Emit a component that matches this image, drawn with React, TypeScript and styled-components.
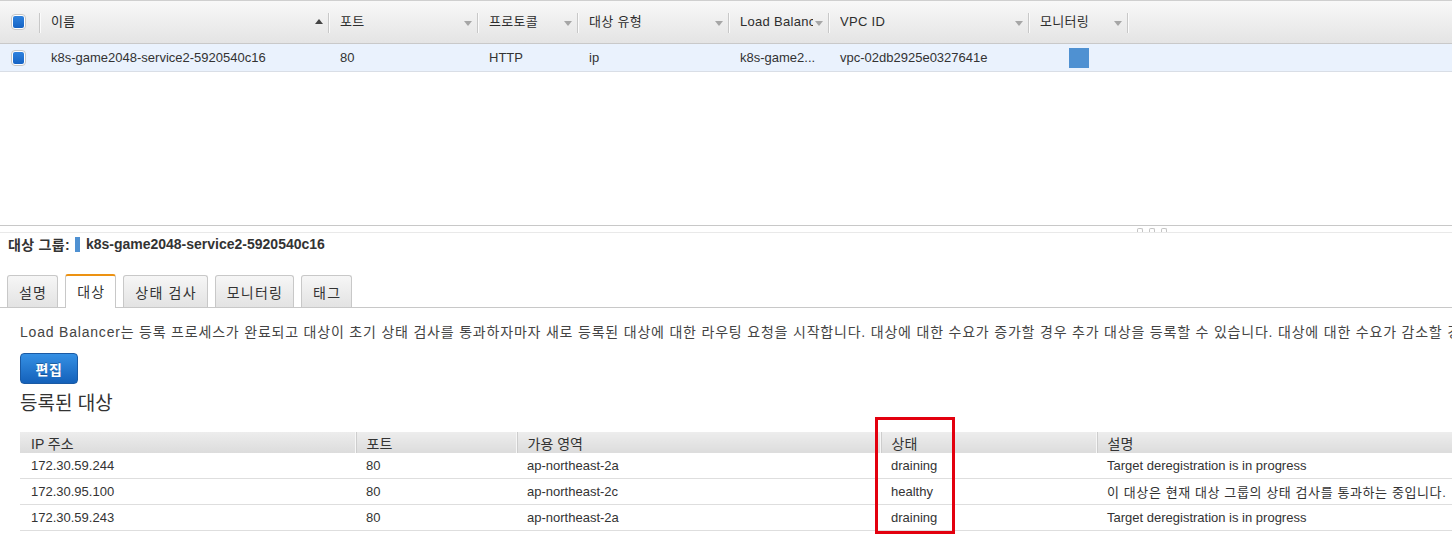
import React from 'react';
import styled, { createGlobalStyle } from 'styled-components';

const GlobalStyle = createGlobalStyle`
  html, body {
    margin: 0;
    padding: 0;
    background: #fff;
    overflow: hidden;
  }
  body {
    font-family: "Liberation Sans", Arial, "Noto Sans CJK KR", sans-serif;
    font-size: 13px;
    color: #333;
  }
`;

const COLS = '40px 289px 149px 100px 151px 100px 200px 99px';

const Page = styled.div`
  width: 1452px;
  overflow: hidden;
  padding-bottom: 20px;
`;

const ListPane = styled.div`
  height: 225px;
  box-sizing: border-box;
  border-top: 1px solid #cfcfcf;
`;

const ListHeader = styled.div`
  display: grid;
  grid-template-columns: ${COLS};
  height: 42px;
  background: linear-gradient(#f8f8f8, #e4e4e4);
  border-bottom: 1px solid #c9c9c9;
`;

const HeaderCell = styled.div`
  position: relative;
  display: flex;
  align-items: center;
  padding: 0 6px 0 11px;
  min-width: 0;

  &::after {
    content: '';
    position: absolute;
    right: 0;
    top: 12px;
    height: 20px;
    width: 1px;
    background: #c8c8c8;
    box-shadow: 1px 0 0 #fbfbfb;
  }
`;

const HeaderLabel = styled.span`
  flex: 1;
  min-width: 0;
  overflow: hidden;
  white-space: nowrap;
  color: #2d2d2d;
  line-height: 18px;
  letter-spacing: 0.3px;
`;

const SortArrow = styled.span<{ $up?: boolean }>`
  flex: none;
  width: 0;
  height: 0;
  margin-left: 2px;
  border-left: 4px solid transparent;
  border-right: 4px solid transparent;
  ${p =>
    p.$up
      ? 'border-bottom: 5px solid #444; margin-top: -2px;'
      : 'border-top: 5px solid #a6a6a6; margin-top: 2px;'}
`;

const ListRow = styled.div`
  display: grid;
  grid-template-columns: ${COLS};
  height: 27px;
  background: #eaf2fd;
  border-bottom: 1px solid #d9dee6;
`;

const RowCell = styled.div<{ $center?: boolean }>`
  display: flex;
  align-items: center;
  justify-content: ${p => (p.$center ? 'center' : 'flex-start')};
  padding: 0 6px 0 11px;
  white-space: nowrap;
  overflow: hidden;
  color: #333;
`;

const CheckBox = styled.span`
  display: inline-flex;
  align-items: center;
  justify-content: center;
  width: 15px;
  height: 16px;
  box-sizing: border-box;
  border: 1px solid #c6c6c6;
  border-radius: 4px;
  background: #fff;

  &::before {
    content: '';
    width: 11px;
    height: 12px;
    border-radius: 2px;
    background: linear-gradient(#2f82de, #1563c4);
  }
`;

const MonitorSwatch = styled.span`
  width: 20px;
  height: 20px;
  background: #4f91d2;
  margin-left: -5px;
`;

const Splitter = styled.div`
  height: 6px;
  border-top: 1px solid #c8c8c8;
  border-bottom: 1px solid #e9e9e9;
  display: flex;
  align-items: flex-end;
  gap: 6px;
  padding-left: 1137px;
  overflow: hidden;
`;

const Grip = styled.span`
  width: 4px;
  height: 3px;
  border: 1px solid #c4c4c4;
  border-bottom: none;
  border-radius: 2px 2px 0 0;
`;

const DetailTitle = styled.div`
  display: flex;
  align-items: center;
  padding: 1px 0 0 8px;
  height: 20px;
  font-size: 14px;
  font-weight: bold;
  color: #333;
  white-space: nowrap;
`;

const TitleLabel = styled.span`
  letter-spacing: 0.3px;
`;

const TitleBar = styled.span`
  display: inline-block;
  width: 5px;
  height: 15px;
  background: #4f91d2;
  margin: 0 6px 0 5px;
`;

const TabBar = styled.div`
  display: flex;
  align-items: flex-end;
  gap: 7px;
  height: 33px;
  margin-top: 20px;
  padding-left: 7px;
  border-bottom: 1px solid #c8c8c8;
`;

const Tab = styled.div<{ $active?: boolean }>`
  box-sizing: border-box;
  display: flex;
  align-items: center;
  padding: 0 10px 0 11px;
  font-size: 14px;
  letter-spacing: 1.2px;
  color: #333;
  white-space: nowrap;
  border: 1px solid #c8c8c8;
  border-bottom: none;
  border-radius: 3px 3px 0 0;
  height: ${p => (p.$active ? '34px' : '32px')};
  margin-bottom: ${p => (p.$active ? '-1px' : '0')};
  background: ${p => (p.$active ? '#fff' : 'linear-gradient(#f6f6f6, #e3e3e3)')};
  border-top: ${p => (p.$active ? '2px solid #ec9212' : '1px solid #c8c8c8')};
  padding-bottom: ${p => (p.$active ? '2px' : '0')};
`;

const Content = styled.div`
  padding: 0 0 0 20px;
`;

const Intro = styled.p`
  margin: 14px 0 0;
  font-size: 14px;
  line-height: 20px;
  letter-spacing: 0.8px;
  color: #444;
  white-space: nowrap;
`;

const EditButton = styled.button`
  display: block;
  margin-top: 11px;
  width: 58px;
  height: 31px;
  padding: 0;
  border: 1px solid #1a5aa4;
  border-radius: 4px;
  background: linear-gradient(#3590e4, #1461ba);
  color: #fff;
  font-family: inherit;
  font-size: 14px;
  font-weight: bold;
  letter-spacing: 0.5px;
  text-shadow: 0 -1px 0 rgba(0, 0, 0, 0.25);
`;

const SectionTitle = styled.h3`
  margin: 8px 0 0;
  font-size: 19px;
  line-height: 24px;
  font-weight: normal;
  color: #333;
`;

const TableWrap = styled.div`
  position: relative;
  margin-top: 16px;
  width: 1600px;
`;

const TargetTable = styled.table`
  width: 1600px;
  table-layout: fixed;
  border-collapse: collapse;
`;

const Th = styled.th`
  height: 21px;
  padding: 0 0 0 11px;
  text-align: left;
  font-weight: normal;
  font-size: 14px;
  color: #333;
  background: linear-gradient(#ededed, #dcdcdc);
  border-left: 1px solid #f7f7f7;
  box-shadow: inset 1px 0 0 #cdcdcd;
  white-space: nowrap;

  &:first-child {
    border-left: none;
    box-shadow: none;
  }
`;

const Td = styled.td`
  height: 25px;
  padding: 0 0 0 11px;
  border-bottom: 1px solid #dedede;
  color: #333;
  white-space: nowrap;
  overflow: hidden;
`;

const KoreanText = styled.span`
  letter-spacing: 0.6px;
`;

const Highlight = styled.div`
  position: absolute;
  left: 855px;
  top: -15px;
  width: 80px;
  height: 117px;
  box-sizing: border-box;
  border: 3px solid #e3000e;
  pointer-events: none;
`;

const listColumns = [
  { label: '이름', up: true },
  { label: '포트' },
  { label: '프로토콜' },
  { label: '대상 유형' },
  { label: 'Load Balancer' },
  { label: 'VPC ID' },
  { label: '모니터링' },
];

const targets = [
  { ip: '172.30.59.244', port: 80, zone: 'ap-northeast-2a', state: 'draining', desc: 'Target deregistration is in progress' },
  { ip: '172.30.95.100', port: 80, zone: 'ap-northeast-2c', state: 'healthy', desc: '이 대상은 현재 대상 그룹의 상태 검사를 통과하는 중입니다.', ko: true },
  { ip: '172.30.59.243', port: 80, zone: 'ap-northeast-2a', state: 'draining', desc: 'Target deregistration is in progress' },
];

const tabs = ['설명', '대상', '상태 검사', '모니터링', '태그'];

export default function App() {
  return (
    <Page>
      <GlobalStyle />
      <ListPane>
        <ListHeader>
          <HeaderCell>
            <CheckBox />
          </HeaderCell>
          {listColumns.map(c => (
            <HeaderCell key={c.label}>
              <HeaderLabel>{c.label}</HeaderLabel>
              <SortArrow $up={c.up} />
            </HeaderCell>
          ))}
        </ListHeader>
        <ListRow>
          <RowCell>
            <CheckBox />
          </RowCell>
          <RowCell>k8s-game2048-service2-5920540c16</RowCell>
          <RowCell>80</RowCell>
          <RowCell>HTTP</RowCell>
          <RowCell>ip</RowCell>
          <RowCell>k8s-game2...</RowCell>
          <RowCell>vpc-02db2925e0327641e</RowCell>
          <RowCell $center>
            <MonitorSwatch />
          </RowCell>
        </ListRow>
      </ListPane>

      <Splitter>
        <Grip />
        <Grip />
        <Grip />
      </Splitter>

      <DetailTitle>
        <TitleLabel>대상 그룹:</TitleLabel>
        <TitleBar />
        k8s-game2048-service2-5920540c16
      </DetailTitle>

      <TabBar>
        {tabs.map(t => (
          <Tab key={t} $active={t === '대상'}>
            {t}
          </Tab>
        ))}
      </TabBar>

      <Content>
        <Intro>
          Load Balancer는 등록 프로세스가 완료되고 대상이 초기 상태 검사를 통과하자마자 새로 등록된 대상에 대한 라우팅 요청을 시작합니다. 대상에 대한 수요가 증가할 경우 추가 대상을 등록할 수 있습니다. 대상에 대한 수요가 감소할 경우 대상을 등록 취소할 수 있습니다.
        </Intro>
        <EditButton>편집</EditButton>
        <SectionTitle>등록된 대상</SectionTitle>
        <TableWrap>
          <TargetTable>
            <colgroup>
              <col style={{ width: 335 }} />
              <col style={{ width: 161 }} />
              <col style={{ width: 364 }} />
              <col style={{ width: 216 }} />
              <col />
            </colgroup>
            <thead>
              <tr>
                <Th>IP 주소</Th>
                <Th>포트</Th>
                <Th>가용 영역</Th>
                <Th>상태</Th>
                <Th>설명</Th>
              </tr>
            </thead>
            <tbody>
              {targets.map(t => (
                <tr key={t.ip}>
                  <Td>{t.ip}</Td>
                  <Td>{t.port}</Td>
                  <Td>{t.zone}</Td>
                  <Td>{t.state}</Td>
                  <Td>{t.ko ? <KoreanText>{t.desc}</KoreanText> : t.desc}</Td>
                </tr>
              ))}
            </tbody>
          </TargetTable>
          <Highlight />
        </TableWrap>
      </Content>
    </Page>
  );
}
